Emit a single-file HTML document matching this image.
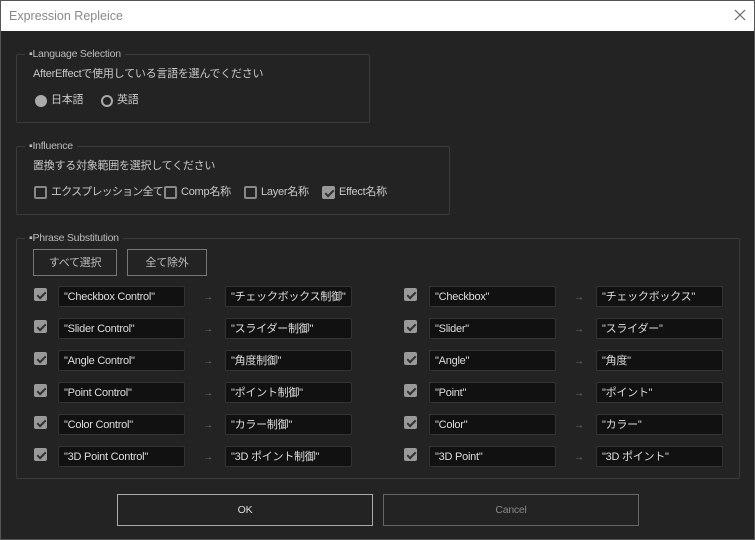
<!DOCTYPE html><html><head><style>
*{box-sizing:border-box;margin:0;padding:0}
body{width:755px;height:540px;background:#232323;font-family:"Liberation Sans","Noto Sans CJK JP",sans-serif;color:#c8c8c8;font-size:11px;letter-spacing:-0.25px;position:relative;overflow:hidden;line-height:13px}
.frame{position:absolute;left:0;top:0;width:755px;height:540px;border:1px solid #555;pointer-events:none}
.a{position:absolute;white-space:nowrap}
.title{left:0;top:0;width:755px;height:31px;background:#fff;color:#888;font-size:12.5px;padding:10px 0 0 9px;letter-spacing:0}
.g{position:absolute;border:1px solid #3a3a3a;border-radius:2px}
.lg{position:absolute;top:-7px;left:8px;background:#232323;padding:0 4px;font-size:10.5px;color:#bbb}
.cb{position:absolute;width:13px;height:13px;border:2px solid #888;border-radius:2px}
.cb.on{background:#999;border-color:#999}
.cb.on:after{content:"";position:absolute;left:3px;top:0px;width:3px;height:7px;border:solid #333;border-width:0 2px 2px 0;transform:rotate(45deg)}
.in{position:absolute;width:127px;height:21px;background:#111;border:1px solid #333;border-radius:2px;color:#ddd;font-size:11px;padding:4px 5px;white-space:nowrap;line-height:12px;overflow:hidden}
.ar{position:absolute;color:#777;font-size:10px}
.btn{position:absolute;border:1px solid #777;text-align:center;color:#bbb}
</style></head><body>
<div class="a title">Expression Repleice</div>
<svg class="a" style="left:734px;top:9px" width="12" height="12"><path d="M1 1L11 11M11 1L1 11" stroke="#666" stroke-width="1.2"/></svg>

<div class="g" style="left:16px;top:54px;width:354px;height:69px"><div class="lg">▪Language Selection</div>
<div class="a" style="left:16px;top:13px">AfterEffectで使用している言語を選んでください</div>
<div class="a" style="left:18px;top:40px;width:12px;height:12px;border-radius:50%;background:#aaa"></div>
<div class="a" style="left:34px;top:39px">日本語</div>
<div class="a" style="left:84px;top:40px;width:12px;height:12px;border-radius:50%;border:2px solid #aaa"></div>
<div class="a" style="left:100px;top:39px">英語</div>
</div>

<div class="g" style="left:16px;top:146px;width:434px;height:69px"><div class="lg">▪Influence</div>
<div class="a" style="left:16px;top:13px">置換する対象範囲を選択してください</div>
<div class="cb" style="left:17px;top:39px"></div><div class="a" style="left:34px;top:39px;letter-spacing:-0.8px">エクスプレッション全て</div>
<div class="cb" style="left:147px;top:39px"></div><div class="a" style="left:164px;top:39px">Comp名称</div>
<div class="cb" style="left:227px;top:39px"></div><div class="a" style="left:244px;top:39px">Layer名称</div>
<div class="cb on" style="left:305px;top:39px"></div><div class="a" style="left:322px;top:39px">Effect名称</div>
</div>

<div class="g" style="left:16px;top:238px;width:724px;height:241px"><div class="lg">▪Phrase Substitution</div></div>
<div class="btn" style="left:33px;top:249px;width:84px;height:27px;padding-top:7px">すべて選択</div>
<div class="btn" style="left:127px;top:249px;width:80px;height:27px;padding-top:7px">全て除外</div>

<div class="btn" style="left:117px;top:494px;width:256px;height:32px;padding-top:9px;border-color:#aaa;color:#ddd;font-size:10.5px">OK</div>
<div class="btn" style="left:383px;top:494px;width:256px;height:32px;padding-top:9px;border-color:#666;color:#888;font-size:10.5px">Cancel</div>

<div class="cb on" style="left:34px;top:288px"></div><div class="in" style="left:58px;top:286px">"Checkbox Control"</div><div class="ar" style="left:203px;top:291px">→</div><div class="in" style="left:225px;top:286px">"チェックボックス制御"</div>
<div class="cb on" style="left:404px;top:288px"></div><div class="in" style="left:429px;top:286px">"Checkbox"</div><div class="ar" style="left:574px;top:291px">→</div><div class="in" style="left:596px;top:286px">"チェックボックス"</div>

<div class="cb on" style="left:34px;top:320px"></div><div class="in" style="left:58px;top:318px">"Slider Control"</div><div class="ar" style="left:203px;top:323px">→</div><div class="in" style="left:225px;top:318px">"スライダー制御"</div>
<div class="cb on" style="left:404px;top:320px"></div><div class="in" style="left:429px;top:318px">"Slider"</div><div class="ar" style="left:574px;top:323px">→</div><div class="in" style="left:596px;top:318px">"スライダー"</div>

<div class="cb on" style="left:34px;top:352px"></div><div class="in" style="left:58px;top:350px">"Angle Control"</div><div class="ar" style="left:203px;top:355px">→</div><div class="in" style="left:225px;top:350px">"角度制御"</div>
<div class="cb on" style="left:404px;top:352px"></div><div class="in" style="left:429px;top:350px">"Angle"</div><div class="ar" style="left:574px;top:355px">→</div><div class="in" style="left:596px;top:350px">"角度"</div>

<div class="cb on" style="left:34px;top:384px"></div><div class="in" style="left:58px;top:382px">"Point Control"</div><div class="ar" style="left:203px;top:387px">→</div><div class="in" style="left:225px;top:382px">"ポイント制御"</div>
<div class="cb on" style="left:404px;top:384px"></div><div class="in" style="left:429px;top:382px">"Point"</div><div class="ar" style="left:574px;top:387px">→</div><div class="in" style="left:596px;top:382px">"ポイント"</div>

<div class="cb on" style="left:34px;top:416px"></div><div class="in" style="left:58px;top:414px">"Color Control"</div><div class="ar" style="left:203px;top:419px">→</div><div class="in" style="left:225px;top:414px">"カラー制御"</div>
<div class="cb on" style="left:404px;top:416px"></div><div class="in" style="left:429px;top:414px">"Color"</div><div class="ar" style="left:574px;top:419px">→</div><div class="in" style="left:596px;top:414px">"カラー"</div>

<div class="cb on" style="left:34px;top:448px"></div><div class="in" style="left:58px;top:446px">"3D Point Control"</div><div class="ar" style="left:203px;top:451px">→</div><div class="in" style="left:225px;top:446px">"3D ポイント制御"</div>
<div class="cb on" style="left:404px;top:448px"></div><div class="in" style="left:429px;top:446px">"3D Point"</div><div class="ar" style="left:574px;top:451px">→</div><div class="in" style="left:596px;top:446px">"3D ポイント"</div>
<div class="frame"></div>
</body></html>
